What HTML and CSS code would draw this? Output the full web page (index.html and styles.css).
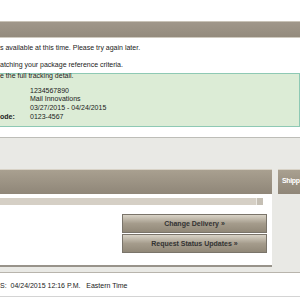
FILE: index.html
```html
<!DOCTYPE html>
<html lang="en">
<head>
    <meta charset="UTF-8">
    <meta name="viewport" content="width=device-width, initial-scale=1.0">
    <title>Tracking Detail</title>
    <link rel="stylesheet" href="styles.css">
</head>
<body>
    <div class="title-bar"></div>

    <div class="notice">
        <p class="notice-line">s available at this time. Please try again later.</p>
        <p class="notice-line notice-second">atching your package reference criteria.</p>
    </div>

    <!-- Package summary -->
    <div class="summary">
        <p class="summary-intro">e the full tracking detail.</p>
        <div class="summary-rows">
            <span class="summary-label"></span><span>1234567890</span>
            <span class="summary-label"></span><span>Mail Innovations</span>
            <span class="summary-label"></span><span>03/27/2015 - 04/24/2015</span>
            <span class="summary-label">ode:</span><span>0123-4567</span>
        </div>
    </div>

    <div class="work-area">
        <div class="main-panel">
            <div class="panel-head"></div>
            <div class="panel-body">
                <div class="progress"><span class="progress-end"></span></div>
                <div class="actions">
                    <button class="action-btn">Change Delivery &raquo;</button>
                    <button class="action-btn">Request Status Updates &raquo;</button>
                </div>
            </div>
        </div>
        <div class="side-panel">
            <div class="side-head">Shipp</div>
        </div>
    </div>

    <div class="status-line">S:&nbsp; 04/24/2015 12:16 P.M.&nbsp;&nbsp; Eastern Time</div>
</body>
</html>
```

FILE: styles.css
```css
body {
    margin: 0;
    font-family: "Liberation Sans", Arial, sans-serif;
    font-size: 7px;
    color: #222;
    background: #fff;
    overflow: hidden;
}
.title-bar {
    margin-top: 21px;
    height: 15px;
    border-top: 1px solid #c9c3b7;
    border-bottom: 1px solid #cfcabf;
    background: linear-gradient(#a0978a, #948b7d);
}
.notice {
    padding: 5px 0 4px;
}
.notice-line {
    margin: 0;
    line-height: 9px;
    white-space: nowrap;
}
.notice-second {
    margin-top: 8px;
}
.summary {
    border-top: 1px solid #8ec9b4;
    border-bottom: 1px solid #8ec9b4;
    border-right: 1px solid #8ec9b4;
    background: #dcecd6;
    padding: 0 0 4.5px;
}
.summary-intro {
    margin: -2.5px 0 0;
    line-height: 8px;
    white-space: nowrap;
}
.summary-rows {
    margin-top: 7px;
    display: grid;
    grid-template-columns: 30px auto;
    line-height: 8.75px;
    white-space: nowrap;
}
.summary-label {
    font-weight: bold;
}
.work-area {
    margin-top: 10px;
    display: flex;
    gap: 6px;
    padding: 31px 0 5px;
    border-top: 1px solid #bdbdb8;
    border-bottom: 1px solid #b8b4ac;
    background: #e9e9e5;
}
.main-panel {
    width: 272px;
    border-top: 1px solid #d8d2c6;
}
.panel-head {
    height: 24px;
    background: linear-gradient(#a9a090, #8f8678);
}
.panel-body {
    background: #fff;
    padding: 4px 5px 12px 0;
    border-bottom: 2px solid #98938a;
}
.progress {
    height: 7px;
    margin-right: 4px;
    display: flex;
    justify-content: flex-end;
    background: #d5cfc5;
}
.progress-end {
    width: 6px;
    background: #c5bfb4;
    border-left: 1px solid #ece9e3;
}
.actions {
    margin: 9px 0 0 122px;
    display: flex;
    flex-direction: column;
    gap: 1px;
}
.action-btn {
    height: 19px;
    padding: 0;
    border: 1px solid #7a746a;
    background: linear-gradient(#d9d3c7, #a59c8c 50%, #918878);
    font: bold 7px "Liberation Sans", Arial, sans-serif;
    color: #333;
}
.side-panel {
    flex: 1;
    min-width: 0;
    border-top: 1px solid #d8d2c6;
}
.side-head {
    height: 24px;
    line-height: 22px;
    padding-left: 4px;
    background: linear-gradient(#a9a090, #8f8678);
    color: #fff;
    font-weight: bold;
    letter-spacing: -0.35px;
    white-space: nowrap;
}
.status-line {
    padding: 7.7px 0 6.3px;
    line-height: 9px;
    white-space: nowrap;
    border-bottom: 1px solid #d4d4d4;
}
```
